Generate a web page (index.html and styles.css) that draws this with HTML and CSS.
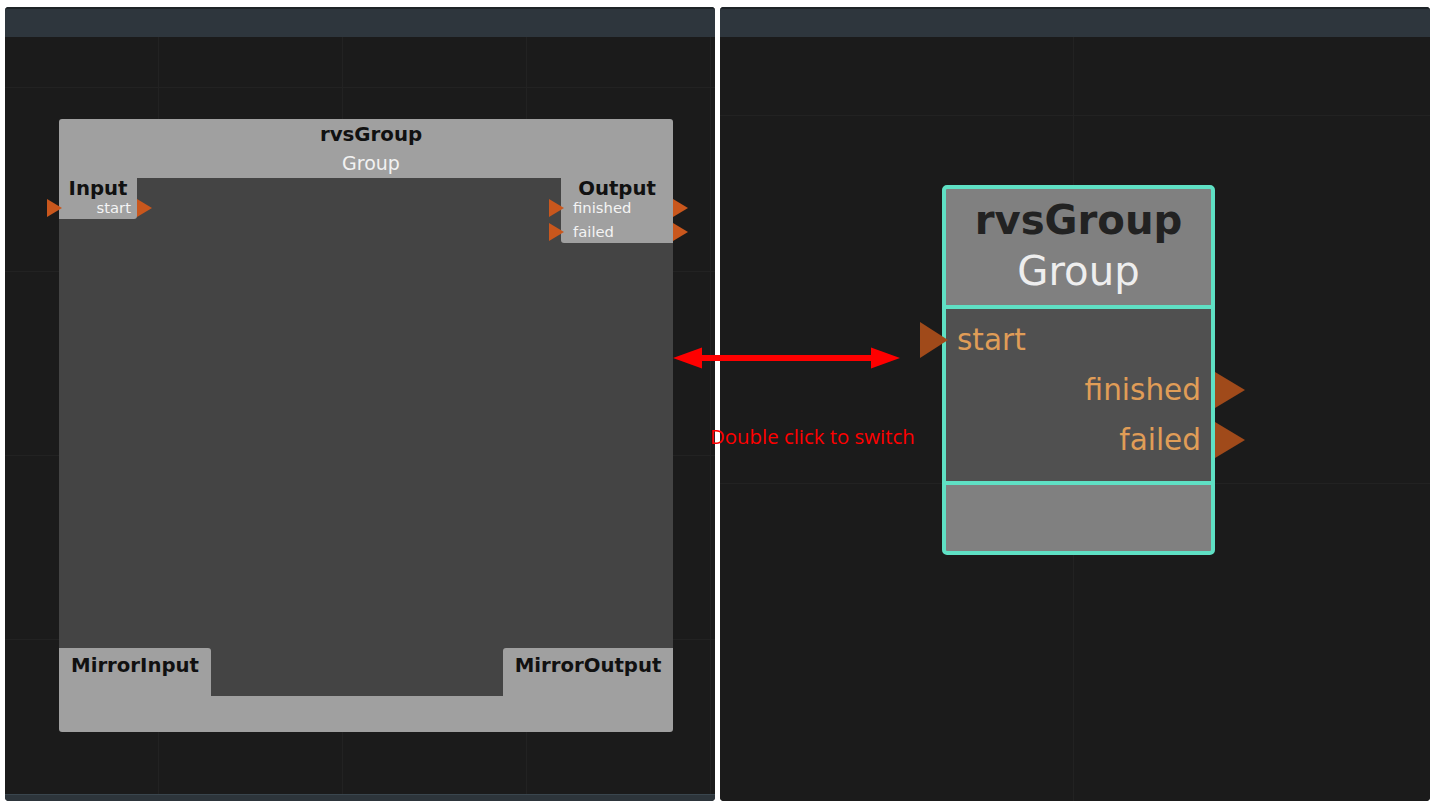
FILE: index.html
```html
<!DOCTYPE html>
<html lang="en">
<head>
<meta charset="utf-8">
<title>Group node – expanded and collapsed</title>
<link rel="stylesheet" href="styles.css">
</head>
<body>
<div class="stage">
  <section class="panel panel-left">
    <div class="panel-header"></div>
    <div class="canvas canvas-left">
      <div class="gnode">
        <div class="gnode-head">
          <div class="gnode-title">rvsGroup</div>
          <div class="gnode-type">Group</div>
        </div>
        <div class="gnode-body">
          <div class="gnode-row">
            <div class="io-box io-input">
              <div class="io-title">Input</div>
              <div class="io-port port-in">start</div>
            </div>
            <div class="io-box io-output">
              <div class="io-title">Output</div>
              <div class="io-port port-out">finished</div>
              <div class="io-port port-out">failed</div>
            </div>
          </div>
          <div class="gnode-row gnode-row-bottom">
            <div class="mirror-box mirror-input">MirrorInput</div>
            <div class="mirror-box mirror-output">MirrorOutput</div>
          </div>
        </div>
        <div class="gnode-foot"></div>
      </div>
    </div>
    <div class="panel-footer"></div>
  </section>

  <section class="panel panel-right">
    <div class="panel-header"></div>
    <div class="canvas canvas-right">
      <div class="cnode">
        <div class="cnode-head">
          <div class="cnode-title">rvsGroup</div>
          <div class="cnode-type">Group</div>
        </div>
        <div class="cnode-body">
          <div class="cport cport-in">start</div>
          <div class="cport cport-out">finished</div>
          <div class="cport cport-out">failed</div>
        </div>
        <div class="cnode-foot"></div>
      </div>
    </div>
  </section>

  <div class="switch-arrow">
    <svg width="227" height="22" viewBox="0 0 227 22">
      <rect x="26" y="8" width="175" height="6" fill="#ff0000"/>
      <polygon points="0,11 29,0.5 29,21.5" fill="#ff0000"/>
      <polygon points="227,11 198,0.5 198,21.5" fill="#ff0000"/>
    </svg>
  </div>
  <div class="switch-text">Double click to switch</div>
</div>
</body>
</html>
```
FILE: styles.css
```css
html, body {
  margin: 0;
  padding: 0;
  background: #ffffff;
}

.stage {
  position: relative;
  width: 1434px;
  height: 809px;
  box-sizing: border-box;
  padding: 7px 4px 8px 5px;
  display: flex;
  gap: 5px;
  font-family: "DejaVu Sans", sans-serif;
}

.panel {
  width: 710px;
  height: 794px;
  display: flex;
  flex-direction: column;
  border-radius: 4px;
  overflow: hidden;
  background: #1b1b1b;
}

.panel-header {
  height: 28px;
  flex: none;
  background: #2e363d;
  border-top: 2px solid #1e2428;
}

.canvas {
  position: relative;
  flex: 1;
  background-color: #1b1b1b;
  background-image:
    linear-gradient(to right, #222222 1px, transparent 1px),
    linear-gradient(to bottom, #222222 1px, transparent 1px);
}

.canvas-left {
  background-size: 184px 184px;
  background-position: 153px 50px;
}

.canvas-right {
  background-size: 368px 368px;
  background-position: 353px 78px;
}

.panel-footer {
  height: 6px;
  flex: none;
  background: #2d353b;
  border-top: 1px solid #3a464e;
}

/* ---------- expanded group node ---------- */
.gnode {
  position: absolute;
  left: 54px;
  top: 82px;
  width: 614px;
  height: 613px;
  background: #a0a0a0;
  border-radius: 3px;
  display: flex;
  flex-direction: column;
}

.gnode-head {
  height: 59px;
  flex: none;
  box-sizing: border-box;
  padding-top: 2px;
  padding-left: 10px;
  text-align: center;
  line-height: 28px;
}

.gnode-title {
  font-weight: bold;
  font-size: 19.8px;
  color: #111111;
}

.gnode-type {
  font-size: 19px;
  color: #f2f2f2;
}

.gnode-body {
  flex: 1;
  background: #444444;
  display: flex;
  flex-direction: column;
  justify-content: space-between;
}

.gnode-row {
  display: flex;
  justify-content: space-between;
  align-items: flex-start;
}

.gnode-row-bottom {
  align-items: flex-end;
}

.gnode-foot {
  height: 36px;
  flex: none;
}

.io-box {
  background: #a0a0a0;
  box-sizing: border-box;
}

.io-input {
  width: 78px;
  height: 41px;
  padding-top: 1px;
  border-bottom-right-radius: 3px;
}

.io-output {
  width: 112px;
  height: 65px;
  border-bottom-left-radius: 3px;
}

.io-title {
  font-weight: bold;
  font-size: 19.7px;
  line-height: 20px;
  color: #111111;
  text-align: center;
}

.io-output .io-title {
  line-height: 18px;
  padding-top: 2px;
  margin-bottom: -2px;
}

.io-port {
  position: relative;
  font-size: 14.8px;
  color: #f4f4f4;
}

.port-in {
  line-height: 18px;
  text-align: right;
  padding-right: 6px;
}

.port-out {
  line-height: 24px;
  padding-left: 12px;
}

.io-port::before,
.io-port::after {
  content: "";
  position: absolute;
  top: 50%;
  margin-top: -9.5px;
  width: 0;
  height: 0;
  border-top: 9.5px solid transparent;
  border-bottom: 9.5px solid transparent;
  border-left: 15px solid #c9571d;
}

.io-port::before {
  left: -12px;
}

.port-in::after {
  left: 100%;
}

.port-out::after {
  left: 100%;
}

.mirror-box {
  height: 48px;
  box-sizing: border-box;
  padding-top: 8px;
  background: #a0a0a0;
  font-weight: bold;
  font-size: 19.7px;
  line-height: 20px;
  color: #111111;
  text-align: center;
}

.mirror-input {
  width: 152px;
  border-top-right-radius: 3px;
}

.mirror-output {
  width: 170px;
  border-top-left-radius: 3px;
}

/* ---------- collapsed group node ---------- */
.cnode {
  position: absolute;
  left: 222px;
  top: 148px;
  width: 273px;
  box-sizing: border-box;
  border: 4px solid #5fe0c4;
  border-radius: 5px;
  display: flex;
  flex-direction: column;
  background: #808080;
}

.cnode-head {
  height: 120px;
  box-sizing: border-box;
  padding-top: 6px;
  text-align: center;
  font-size: 40.2px;
  line-height: 51px;
  border-bottom: 4px solid #5fe0c4;
}

.cnode-title {
  font-weight: bold;
  color: #222222;
}

.cnode-type {
  color: #eeeeee;
}

.cnode-body {
  height: 176px;
  box-sizing: border-box;
  padding-top: 6px;
  background: #505050;
  border-bottom: 4px solid #5fe0c4;
}

.cport {
  position: relative;
  height: 50px;
  line-height: 50px;
  font-size: 29.5px;
  color: #e09d57;
}

.cport-in {
  padding-left: 11px;
}

.cport-out {
  text-align: right;
  padding-right: 10px;
}

.cport::before {
  content: "";
  position: absolute;
  top: 50%;
  margin-top: -18px;
  width: 0;
  height: 0;
  border-top: 18px solid transparent;
  border-bottom: 18px solid transparent;
  border-left: 28px solid #a04a1a;
}

.cport-in::before {
  left: -26px;
}

.cport-out::before {
  left: calc(100% + 4px);
  border-left-width: 30px;
}

.cnode-foot {
  height: 66px;
}

/* ---------- overlay hint ---------- */
.switch-arrow {
  position: absolute;
  left: 673px;
  top: 347px;
  width: 227px;
  height: 22px;
  line-height: 0;
}

.switch-text {
  position: absolute;
  left: 710px;
  top: 422px;
  font-family: "Open Sans", sans-serif;
  font-size: 20.4px;
  line-height: 28px;
  color: #ff0000;
}
```
